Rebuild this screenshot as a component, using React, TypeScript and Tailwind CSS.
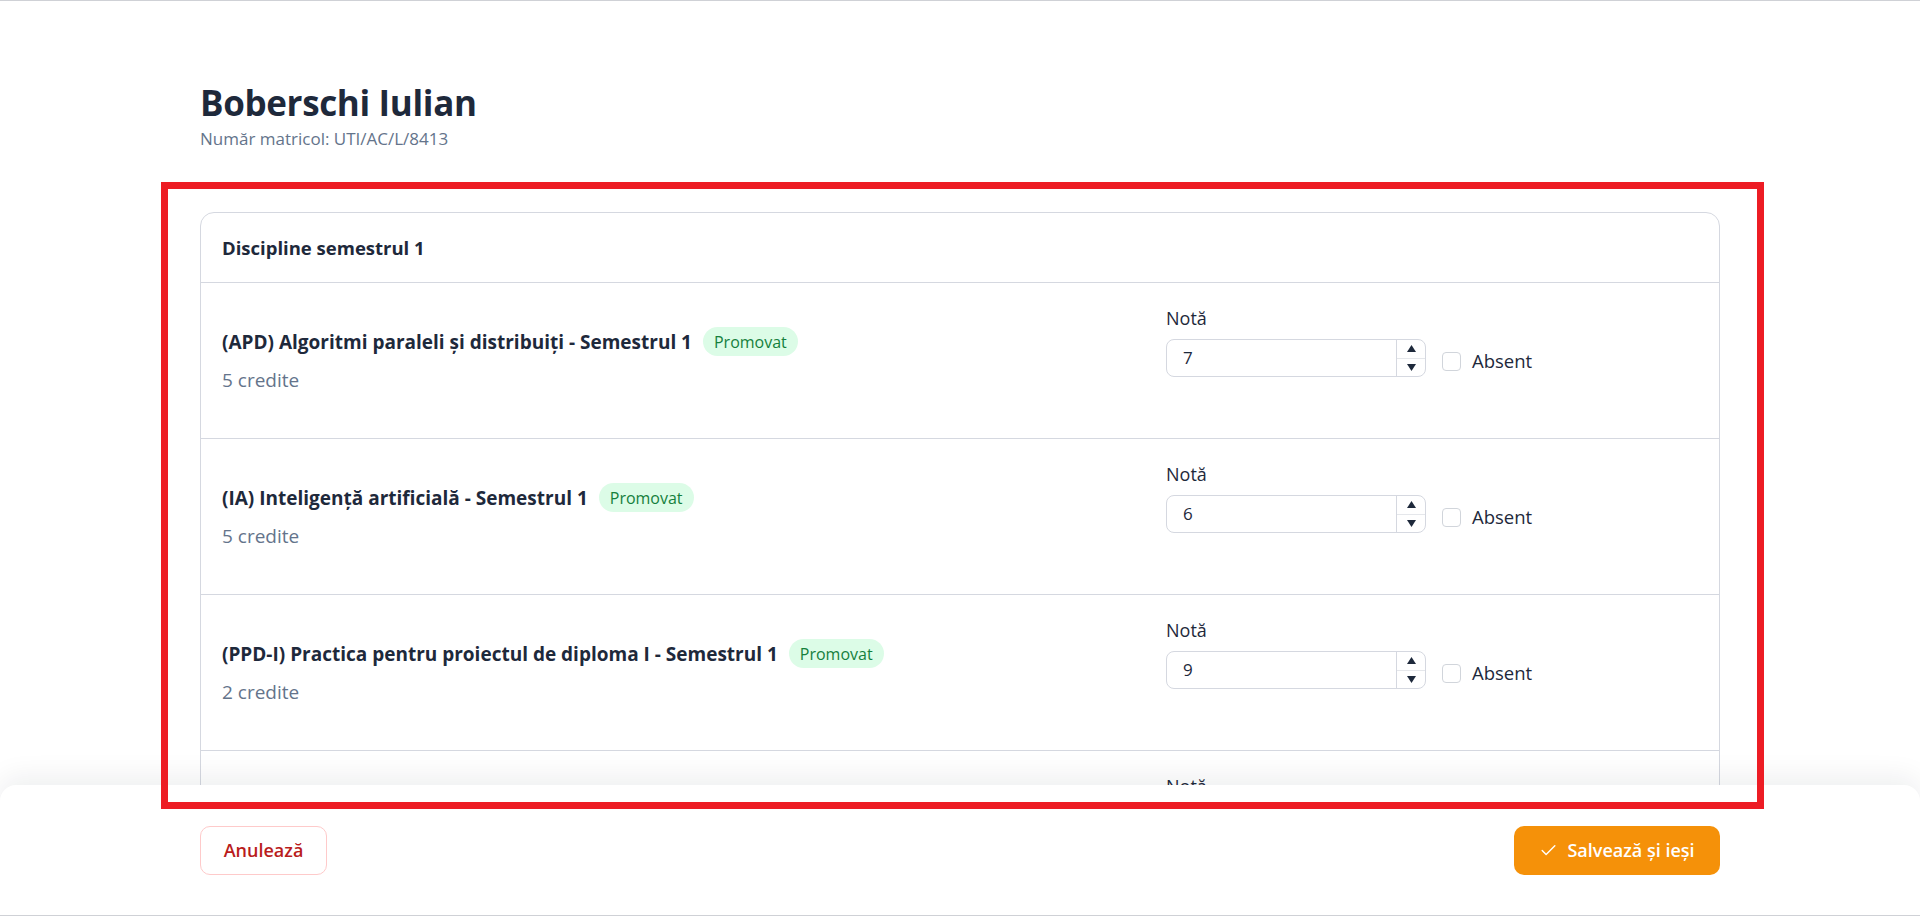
import React from 'react';

interface Discipline {
  title?: string;
  credits?: number;
  grade: string;
}

// ultimul rand e acoperit de bara de jos, se vede doar eticheta
const disciplines: Discipline[] = [
  { title: '(APD) Algoritmi paraleli și distribuiți - Semestrul 1', credits: 5, grade: '7' },
  { title: '(IA) Inteligență artificială - Semestrul 1', credits: 5, grade: '6' },
  { title: '(PPD-I) Practica pentru proiectul de diploma I - Semestrul 1', credits: 2, grade: '9' },
  { grade: '8' },
];

const GradeInput: React.FC<{ value: string }> = ({ value }) => (
  <div className="flex h-[38px] w-[260px] items-stretch rounded-[8px] border border-[#d5d8e0] bg-white">
    <span className="flex flex-1 items-center pl-[16px] text-[17px] text-[#1e293b]">{value}</span>
    <div className="flex w-[29px] flex-col border-l border-[#d5d8e0]">
      <div className="flex flex-1 items-center justify-center border-b border-[#e5e7eb]">
        <svg width="9" height="7" viewBox="0 0 9 7">
          <path d="M4.5 0 9 7H0z" fill="#1e293b" />
        </svg>
      </div>
      <div className="flex flex-1 items-center justify-center">
        <svg width="9" height="7" viewBox="0 0 9 7">
          <path d="M0 0h9L4.5 7z" fill="#1e293b" />
        </svg>
      </div>
    </div>
  </div>
);

const DisciplineRow: React.FC<{ item: Discipline }> = ({ item }) => (
  <div className="flex h-[156px] items-center border-b border-[#d5d8e0] pl-[21px]">
    <div className="flex-1">
      {item.title && (
        <>
          <div className="flex items-center gap-[11px]">
            <span className="text-[19px] font-bold leading-[28px] text-[#1e293b]">{item.title}</span>
            <span className="flex h-[29px] items-center rounded-full bg-[#dcfce7] px-[11px] text-[16px] text-[#15803d]">
              Promovat
            </span>
          </div>
          <p className="mt-[10px] text-[19px] leading-[28px] text-[#64748b]">{item.credits} credite</p>
        </>
      )}
    </div>
    <div className="w-[553px] pb-[40px]">
      <label className="block text-[18px] leading-[28px] text-[#1e293b]">Notă</label>
      <div className="mt-[7px] flex items-center gap-4">
        <GradeInput value={item.grade} />
        <label className="mt-[6px] flex items-center gap-[11px] text-[18.5px] text-[#1e293b]">
          <span className="h-[19px] w-[19px] rounded-[4px] border-[1.5px] border-[#d1d5db] bg-white" />
          Absent
        </label>
      </div>
    </div>
  </div>
);

const App: React.FC = () => {
  return (
    <div
      className="relative h-[916px] overflow-hidden border-y border-[#cfd1d6] bg-white"
      style={{ fontFamily: '"Open Sans", "Noto Sans", sans-serif' }}
    >
      {/* zona derulabila */}
      <div className="h-[784px] overflow-hidden">
        <div className="mx-auto w-[1520px] pt-[82px]">
          <h1 className="text-[35px] font-bold leading-[40px] tracking-[-0.01em] text-[#1e293b]">Boberschi Iulian</h1>
          <p className="mt-1 text-[17px] leading-[24px] text-[#64748b]">Număr matricol: UTI/AC/L/8413</p>

          <div className="mt-[61px] overflow-hidden rounded-[14px] border border-[#d5d8e0]">
            <div className="flex h-[70px] items-center border-b border-[#d5d8e0] px-[21px]">
              <h2 className="text-[18.5px] font-bold text-[#1e293b]">Discipline semestrul 1</h2>
            </div>
            {disciplines.map((d, i) => (
              <DisciplineRow key={i} item={d} />
            ))}
          </div>
        </div>
      </div>

      {/* bara de jos */}
      <div className="absolute inset-x-0 bottom-0 h-[130px] rounded-t-[16px] bg-white shadow-[0_-8px_28px_rgba(15,23,42,0.07)]">
        <div className="mx-auto flex h-full w-[1520px] items-center justify-between">
          <button className="h-[49px] w-[127px] rounded-[10px] border border-[#fecaca] text-[18px] font-semibold text-[#b91c1c]">
            Anulează
          </button>
          <button className="flex h-[49px] w-[206px] items-center justify-center gap-[9px] rounded-[10px] bg-[#f59109] text-[18px] font-semibold text-white">
            <svg width="19" height="19" viewBox="0 0 24 24" fill="none" stroke="currentColor" strokeWidth="1.8" strokeLinecap="round" strokeLinejoin="round">
              <path d="M20 6 9 17l-5-5" />
            </svg>
            Salvează și ieși
          </button>
        </div>
      </div>

      {/* chenar evidentiere */}
      <div className="pointer-events-none absolute left-[161px] top-[181px] h-[627px] w-[1603px] border-[7px] border-[#ed1c24]" />
    </div>
  );
};

export default App;
